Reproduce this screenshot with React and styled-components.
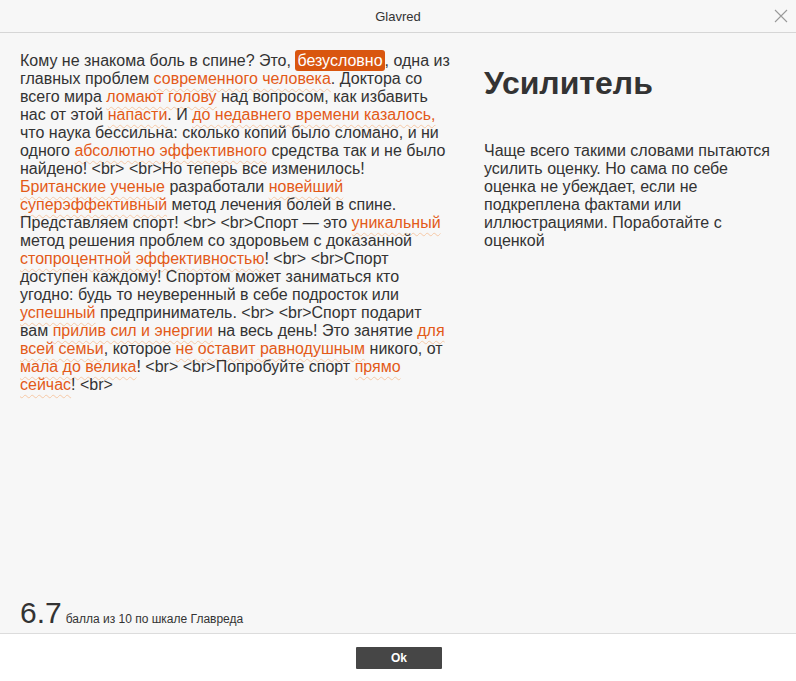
import React from 'react';
import styled, { createGlobalStyle } from 'styled-components';

const GlobalStyle = createGlobalStyle`
  html, body {
    margin: 0;
    padding: 0;
    background: #fff;
  }
  body {
    font-family: "Liberation Sans", Arial, sans-serif;
    color: #333;
  }
`;

const Modal = styled.div`
  display: flex;
  flex-direction: column;
  width: 796px;
  height: 681px;
  background: #f7f7f7;
`;

const Header = styled.div`
  position: relative;
  height: 32px;
  display: flex;
  align-items: center;
  justify-content: center;
  border-bottom: 1px solid #d6d6d6;
  font-size: 13px;
  color: #333;
`;

const Close = styled.button`
  position: absolute;
  right: 8px;
  top: 9px;
  width: 14px;
  height: 14px;
  padding: 0;
  border: 0;
  background: none;
  cursor: pointer;
`;

const Body = styled.div`
  flex: 1;
  display: flex;
  flex-direction: column;
`;

const Columns = styled.div`
  flex: 1;
  display: flex;
  padding: 19px 0 0 20px;
`;

const TextColumn = styled.div`
  width: 432px;
  font-size: 16px;
  line-height: 18px;
  color: #333;
`;

const Mark = styled.span`
  color: ${(p) => (p.active ? '#fff' : '#e35a18')};
  background: ${(p) => (p.active ? '#d9560f' : 'transparent')};
  border-radius: ${(p) => (p.active ? '3px' : '0')};
  padding: ${(p) => (p.active ? '2px 2px 2px' : '0')};
  text-decoration: ${(p) => (p.active ? 'none' : 'underline wavy')};
  text-decoration-color: #f6c8a6;
  text-decoration-thickness: 1px;
  text-underline-offset: 4px;
`;

const Hint = styled.div`
  margin-left: 32px;
  width: 296px;
`;

const HintTitle = styled.h2`
  margin: 13px 0 0;
  font-size: 32px;
  line-height: 36px;
  font-weight: bold;
  color: #333;
`;

const HintText = styled.p`
  margin: 41px 0 0;
  font-size: 16px;
  line-height: 18px;
  color: #333;
`;

const Score = styled.div`
  display: flex;
  align-items: baseline;
  gap: 4px;
  padding: 0 20px 3px;
`;

const ScoreValue = styled.span`
  font-size: 30px;
  line-height: 34px;
  color: #333;
`;

const ScoreLabel = styled.span`
  font-size: 12px;
  color: #333;
`;

const Footer = styled.div`
  height: 47px;
  display: flex;
  align-items: center;
  justify-content: center;
  background: #fff;
  border-top: 1px solid #dcdcdc;
`;

const OkButton = styled.button`
  width: 86px;
  height: 22px;
  margin-left: 2px;
  border: 0;
  border-radius: 1px;
  background: #464646;
  color: #fff;
  font-family: "Liberation Sans", Arial, sans-serif;
  font-size: 12px;
  font-weight: bold;
  cursor: pointer;
`;

const segments = [
  ['Кому не знакома боль в спине? Это, '],
  ['безусловно', 'active'],
  [', одна из главных проблем '],
  ['современного человека', 'mark'],
  ['. Доктора со всего мира '],
  ['ломают голову', 'mark'],
  [' над вопросом, как избавить нас от этой '],
  ['напасти', 'mark'],
  ['. И '],
  ['до недавнего времени казалось,', 'mark'],
  [' что наука бессильна: сколько копий было сломано, и ни одного '],
  ['абсолютно эффективного', 'mark'],
  [' средства так и не было найдено! <br> <br>Но теперь все изменилось! '],
  ['Британские ученые', 'mark'],
  [' разработали '],
  ['новейший суперэффективный', 'mark'],
  [' метод лечения болей в спине. Представляем спорт! <br> <br>Спорт — это '],
  ['уникальный', 'mark'],
  [' метод решения проблем со здоровьем с доказанной '],
  ['стопроцентной эффективностью', 'mark'],
  ['! <br> <br>Спорт доступен каждому! Спортом может заниматься кто угодно: будь то неуверенный в себе подросток или '],
  ['успешный', 'mark'],
  [' предприниматель. <br> <br>Спорт подарит вам '],
  ['прилив сил и энергии', 'mark'],
  [' на весь день! Это занятие '],
  ['для всей семьи', 'mark'],
  [', которое '],
  ['не оставит равнодушным', 'mark'],
  [' никого, от '],
  ['мала до велика', 'mark'],
  ['! <br> <br>Попробуйте спорт '],
  ['прямо сейчас', 'mark'],
  ['! <br>'],
];

export default function App() {
  return (
    <>
      <GlobalStyle />
      <Modal>
        <Header>
          Glavred
          <Close aria-label="Закрыть">
            <svg width="14" height="14" viewBox="0 0 14 14">
              <path d="M1 1L13 13M13 1L1 13" stroke="#9a9a9a" strokeWidth="1.1" fill="none" />
            </svg>
          </Close>
        </Header>
        <Body>
          <Columns>
            <TextColumn>
              {segments.map(([text, kind], i) =>
                kind ? (
                  <Mark key={i} active={kind === 'active' ? 1 : 0}>{text}</Mark>
                ) : (
                  <React.Fragment key={i}>{text}</React.Fragment>
                )
              )}
            </TextColumn>
            <Hint>
              <HintTitle>Усилитель</HintTitle>
              <HintText>
                Чаще всего такими словами пытаются усилить оценку. Но сама по себе
                оценка не убеждает, если не подкреплена фактами или иллюстрациями.
                Поработайте с оценкой
              </HintText>
            </Hint>
          </Columns>
          <Score>
            <ScoreValue>6.7</ScoreValue>
            <ScoreLabel>балла из 10 по шкале Главреда</ScoreLabel>
          </Score>
        </Body>
        <Footer>
          <OkButton>Ok</OkButton>
        </Footer>
      </Modal>
    </>
  );
}
